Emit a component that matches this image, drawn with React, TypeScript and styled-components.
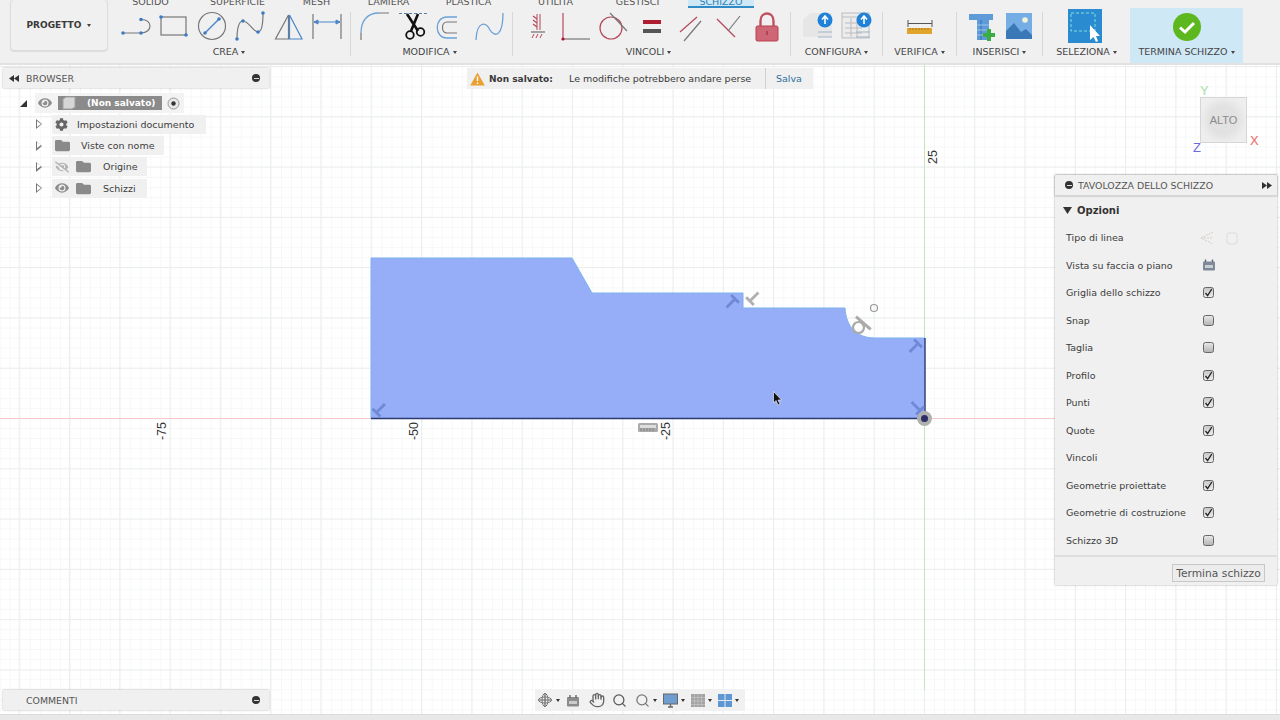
import React from 'react'
import styled, { createGlobalStyle } from 'styled-components'
import { FaCog, FaEye, FaEyeSlash, FaFolder } from 'react-icons/fa'
import { Hand, Search } from 'lucide-react'

const uiFont = `'DejaVu Sans', 'Open Sans', sans-serif`

const GlobalStyle = createGlobalStyle`
  html, body {
    margin: 0;
    padding: 0;
    background: #fff;
    font-family: ${uiFont};
    color: #3c3c3c;
  }
`

const Page = styled.div`
  width: 1280px;
  height: 720px;
  display: flex;
  flex-direction: column;
  overflow: hidden;
`

const Toolbar = styled.header`
  flex: none;
  height: 63px;
  background: #f0f0f0;
  border-bottom: 2px solid #e2e2e2;
  position: relative;
  display: flex;
  flex-direction: column;
`

const TabRow = styled.nav`
  height: 8px;
  flex: none;
  display: flex;
  padding-left: 118px;
  overflow: hidden;
`

const Tab = styled.div<{ $w: number; $active?: boolean }>`
  width: ${props => props.$w}px;
  height: 9px;
  text-align: center;
  font-size: 9.5px;
  line-height: 4px;
  color: ${props => (props.$active ? '#2d7fb8' : '#555')};
  background: ${props => (props.$active ? '#cfe8f5' : 'transparent')};
  border-bottom: ${props => (props.$active ? '3px solid #2f8ac6' : '0')};
  box-sizing: border-box;
  white-space: nowrap;
`

const Gap = styled.span<{ $w: number }>`
  width: ${props => props.$w}px;
  flex: none;
`

const Ribbon = styled.div`
  flex: 1;
  display: flex;
  padding-left: 10px;
`

const ProjectButton = styled.button`
  width: 98px;
  height: 52px;
  margin: -9px 10px 0 0;
  background: #f0f0f0;
  border: 1px solid #dcdcdc;
  border-radius: 4px;
  box-shadow: 0 1px 1px rgba(0, 0, 0, 0.08);
  font: 600 9px ${uiFont};
  color: #3a3a3a;
  padding: 0;
`

const Group = styled.section<{ $w: number; $pad?: number; $active?: boolean }>`
  width: ${props => props.$w}px;
  flex: none;
  display: flex;
  flex-direction: column;
  align-items: stretch;
  background: ${props => (props.$active ? '#cfe8f5' : 'transparent')};

  & > span {
    padding-right: ${props => props.$pad ?? 0}px;
  }
`

const IconRow = styled.div`
  height: 36px;
  display: flex;
`

const GroupLabel = styled.span`
  display: block;
  text-align: center;
  font-size: 9.5px;
  line-height: 14px;
  margin-top: 1px;
  color: #444;
  white-space: nowrap;
`

const Caret = styled.i`
  display: inline-block;
  margin-left: 3px;
  vertical-align: 1px;
  border-left: 2.5px solid transparent;
  border-right: 2.5px solid transparent;
  border-top: 3px solid #444;
`

const Separator = styled.div`
  width: 1px;
  flex: none;
  height: 44px;
  margin-top: 4px;
  background: #d8d8d8;
`

const Canvas = styled.main`
  flex: 1;
  position: relative;
  background-color: #fff;
  background-image: linear-gradient(to right, #eceeee 1px, transparent 1px),
    linear-gradient(to bottom, #eceeee 1px, transparent 1px),
    linear-gradient(to right, #f6f7f7 1px, transparent 1px),
    linear-gradient(to bottom, #f6f7f7 1px, transparent 1px);
  background-size: 50.3px 50.3px, 50.3px 50.3px, 10.06px 10.06px, 10.06px 10.06px;
  background-position: 924px 353px, 924px 353px, 924px 353px, 924px 353px;
`

const SketchLayer = styled.svg`
  position: absolute;
  left: 0;
  top: 0;
`

const AxisLabel = styled.span<{ $x: number; $y: number }>`
  position: absolute;
  left: ${props => props.$x}px;
  top: ${props => props.$y}px;
  transform: translate(-50%, -50%) rotate(-90deg);
  font: 12.5px 'Liberation Sans', Arial, sans-serif;
  color: #333;
`

const PanelBar = styled.div`
  height: 20px;
  box-sizing: border-box;
  display: flex;
  align-items: center;
  gap: 5px;
  background: #f0f0f0;
  box-shadow: 0 0 2px rgba(0, 0, 0, 0.3);
  font-size: 9.4px;
  color: #555;
`

const BrowserPanel = styled.aside`
  position: absolute;
  left: 3px;
  top: 3px;
  width: 266px;
`

const BrowserBar = styled(PanelBar)`
  padding: 0 9px 0 6px;
  gap: 6px;
`

const MinusDot = styled.i`
  width: 8px;
  height: 8px;
  border-radius: 50%;
  background: #333;
  position: relative;
  flex: none;

  &::after {
    content: '';
    position: absolute;
    left: 1.5px;
    right: 1.5px;
    top: 3.5px;
    height: 1px;
    background: #ddd;
  }
`

const Spacer = styled.div`
  flex: 1;
`

const Tree = styled.ul`
  list-style: none;
  margin: 5px 0 0;
  padding: 0;
  display: flex;
  flex-direction: column;
  gap: 1px;
`

const TreeRow = styled.li<{ $root?: boolean }>`
  height: 20.25px;
  display: flex;
  align-items: center;
  padding-left: ${props => (props.$root ? 17 : 33)}px;
  font-size: 9.5px;
  color: #3c3c3c;
`

const RootChip = styled.div`
  display: flex;
  align-items: center;
  height: 20px;
  background: #f3f3f3;
  padding: 0 4px 0 3px;
  margin-left: 8px;
`

const RootTitle = styled.div`
  width: 104px;
  height: 14px;
  display: flex;
  align-items: center;
  background: #8b8b8b;
  color: #fff;
  font-weight: 600;
  font-size: 9px;
  margin: 0 5px 0 6px;
`

const RootName = styled.span`
  margin-left: 9px;
`

const Chip = styled.div<{ $w: number; $iconGap?: number; $textGap: number }>`
  width: ${props => props.$w}px;
  height: 19px;
  margin-left: 10px;
  background: #f0f0f0;
  display: flex;
  align-items: center;
  padding-left: 3px;
  box-sizing: border-box;
  gap: ${props => props.$iconGap ?? 4}px;

  & > span {
    margin-left: ${props => props.$textGap}px;
  }
`

const Expander = styled.i`
  width: 0;
  height: 0;
  border-left: 6px solid #777;
  border-top: 5px solid transparent;
  border-bottom: 5px solid transparent;
  position: relative;
  flex: none;

  &::after {
    content: '';
    position: absolute;
    left: -5px;
    top: -3.4px;
    border-left: 4px solid #fff;
    border-top: 3.4px solid transparent;
    border-bottom: 3.4px solid transparent;
  }
`

const ExpandedMark = styled.i`
  width: 0;
  height: 0;
  flex: none;
  border-right: 7px solid #333;
  border-top: 7px solid transparent;
`

const Notice = styled.div`
  position: absolute;
  left: 467px;
  top: 3px;
  width: 346px;
  height: 21px;
  box-sizing: border-box;
  display: flex;
  align-items: center;
  background: #f0f0f0;
  font-size: 9.5px;
  color: #3a3a3a;
  padding-left: 3px;
`

const NoticeTitle = styled.strong`
  margin-left: 4px;
  width: 80px;
  font-size: 9px;
  font-weight: 600;
`

const NoticeText = styled.span`
  width: 196px;
`

const NoticeAction = styled.span`
  height: 21px;
  line-height: 21px;
  border-left: 1px solid #d0d0d0;
  padding-left: 10px;
  color: #2f6f9f;
`

const CubeFace = styled.div`
  position: absolute;
  left: 1200px;
  top: 32px;
  width: 47px;
  height: 46px;
  box-sizing: border-box;
  border: 1px solid #d6d6d6;
  background: radial-gradient(circle, #e2e2e2 0%, #e2e2e2 45%, #eeeeee 75%);
  display: flex;
  align-items: center;
  justify-content: center;
  font: 11px 'Liberation Sans', Arial, sans-serif;
  color: #8a8a8a;
`

const AxisTag = styled.span<{ $x: number; $y: number; $c: string }>`
  position: absolute;
  left: ${props => props.$x}px;
  top: ${props => props.$y}px;
  font: 13px 'Liberation Sans', Arial, sans-serif;
  color: ${props => props.$c};
`

const Palette = styled.aside`
  position: absolute;
  left: 1055px;
  top: 110px;
  width: 222px;
  background: #f0f0f0;
  box-shadow: 0 0 2px rgba(0, 0, 0, 0.35);
`

const PaletteBar = styled(PanelBar)`
  height: 21px;
  padding: 0 5px 0 10px;
  border-bottom: 1px solid #d4d4d4;
`

const SectionTitle = styled.div`
  height: 27px;
  margin-top: 1px;
  display: flex;
  align-items: center;
  gap: 5px;
  padding-left: 8px;
  font-size: 10px;
  font-weight: 600;
  color: #333;
`

const OptionRow = styled.div`
  height: 27.5px;
  display: grid;
  grid-template-columns: 137px 1fr;
  align-items: center;
  padding-left: 11px;
  font-size: 9.5px;
  color: #3c3c3c;
  white-space: nowrap;
`

const CheckBox = styled.span<{ $on: boolean }>`
  width: 11px;
  height: 11px;
  box-sizing: border-box;
  display: flex;
  align-items: center;
  justify-content: center;
  border: 1px solid #666;
  border-radius: 2.5px;
  background: ${props => (props.$on ? 'linear-gradient(#c8c8c8, #ececec)' : 'linear-gradient(#e8e8e8, #b4b4b4)')};
`

const IconPair = styled.span`
  display: flex;
  gap: 11px;
  margin-left: -3px;
`

const PlaneIcon = styled.svg`
  margin-left: -1px;
`

const PaletteFooter = styled.div`
  margin-top: 1px;
  height: 30px;
  box-sizing: border-box;
  border-top: 2px solid #dedede;
  display: flex;
  align-items: flex-start;
  justify-content: flex-end;
  padding: 7px 12px 0 0;
`

const FooterButton = styled.button`
  width: 93px;
  height: 18px;
  padding: 0;
  background: #ececec;
  border: 1px solid #c8c8c8;
  font: 10.7px ${uiFont};
  color: #555;
`

const CommentsPanel = styled.aside`
  position: absolute;
  left: 3px;
  top: 625px;
  width: 266px;
`

const CommentsBar = styled(PanelBar)`
  padding: 0 9px 0 23px;
`

const NavBar = styled.div`
  position: absolute;
  left: 535px;
  top: 624px;
  width: 210px;
  height: 22px;
  background: rgba(240, 240, 240, 0.9);
  display: flex;
  align-items: center;
  padding-left: 2px;
  box-sizing: border-box;
  color: #666;
`

const NavCaret = styled(Caret)`
  margin: 0 6px 0 3px;
  border-top-color: #333;
`

const BottomEdge = styled.div`
  height: 5px;
  flex: none;
  background: #e8e8e8;
  border-top: 1px solid #dcdcdc;
`

const Tile = ({ from, to, children }: { from: number; to: number; children: React.ReactNode }) => (
  <svg width={to - from} height={36} viewBox={`${from} 8 ${to - from} 36`} style={{ flex: 'none' }}>
    {children}
  </svg>
)

const blue = '#4a86c8'
const gray = '#777'
const red = '#b5485a'

const Dot = ({ x, y }: { x: number; y: number }) => <circle cx={x} cy={y} r={1.8} fill='#3c7cc4' />

const Check = () => (
  <svg width='9' height='9' viewBox='0 0 9 9'>
    <path d='M1.5 5 L3.6 7.6 L7.8 1' fill='none' stroke='#222' strokeWidth='1.3' />
  </svg>
)

// the little T that marks a perpendicular constraint on the sketch
const PerpMark = ({ x, y, r, c }: { x: number; y: number; r: number; c: string }) => (
  <g transform={`translate(${x} ${y}) rotate(${r})`} stroke={c} strokeWidth='2.8' fill='none'>
    <path d='M-5.5 -5 H5.5 M0 -5 V7' />
  </g>
)

const options: [string, boolean][] = [
  ['Griglia dello schizzo', true],
  ['Snap', false],
  ['Taglia', false],
  ['Profilo', true],
  ['Punti', true],
  ['Quote', true],
  ['Vincoli', true],
  ['Geometrie proiettate', true],
  ['Geometrie di costruzione', true],
  ['Schizzo 3D', false],
]

const outline = 'M371 258 H572 L592 293 H743 V308 H845 C846 326 856 338 875 338 H925 V418.5 H371 Z'

export default function App() {
  return (
    <Page>
      <GlobalStyle />
      <Toolbar>
        <TabRow>
          <Tab $w={65}>SOLIDO</Tab>
          <Tab $w={109}>SUPERFICIE</Tab>
          <Tab $w={49}>MESH</Tab>
          <Tab $w={95}>LAMIERA</Tab>
          <Tab $w={65}>PLASTICA</Tab>
          <Tab $w={109}>UTILITÀ</Tab>
          <Tab $w={55}>GESTISCI</Tab>
          <Gap $w={23} />
          <Tab $w={66} $active>SCHIZZO</Tab>
        </TabRow>
        <Ribbon>
          <ProjectButton>
            PROGETTO <Caret />
          </ProjectButton>
          <Group $w={232} $pad={10}>
            <IconRow>
              <Tile from={118} to={155}>
                <path d='M123 33 H141 M141 19.5 C153 19 153 33 141 33' fill='none' stroke={gray} strokeWidth='1.2' />
                <Dot x={123} y={33} />
                <Dot x={141} y={33} />
                <Dot x={141} y={19.5} />
              </Tile>
              <Tile from={155} to={195}>
                <rect x='161' y='17' width='25' height='18' fill='none' stroke={gray} strokeWidth='1.2' />
                <Dot x={161} y={17} />
                <Dot x={186} y={35} />
              </Tile>
              <Tile from={195} to={232}>
                <circle cx='212' cy='26' r='13.5' fill='none' stroke={gray} strokeWidth='1.2' />
                <path d='M205 33 L219 19' stroke={blue} strokeWidth='1.4' />
                <Dot x={205} y={33} />
                <Dot x={219} y={19} />
              </Tile>
              <Tile from={232} to={270}>
                <path d='M237 39 C237 28 239 21 243 21 C249 21 253 32 258 32 C262 32 263 22 263 13' fill='none' stroke={gray} strokeWidth='1.2' />
                <Dot x={237} y={39} />
                <Dot x={243} y={21} />
                <Dot x={258} y={32} />
                <Dot x={263} y={13} />
              </Tile>
              <Tile from={270} to={308}>
                <path d='M288.5 15 L275.5 39 H288.5 Z' fill='none' stroke={gray} strokeWidth='1.2' />
                <path d='M289.5 15 L302 39 H289.5 Z' fill='none' stroke={blue} strokeWidth='1.2' />
              </Tile>
              <Tile from={308} to={350}>
                <path d='M313 14 V39 M341 14 V39' stroke={gray} strokeWidth='1.2' />
                <path d='M314 22 H340 M314 22 L318 20 V24 Z M340 22 L336 20 V24 Z' stroke={blue} fill={blue} strokeWidth='1' />
              </Tile>
            </IconRow>
            <GroupLabel>
              CREA
              <Caret />
            </GroupLabel>
          </Group>
          <Separator />
          <Group $w={161} $pad={4}>
            <IconRow>
              <Tile from={351} to={395}>
                <path d='M361 33 C361 21 367 13 379 13' fill='none' stroke='#6aa0d8' strokeWidth='1.3' />
                <path d='M379 13 H389 M361 33 V40' stroke={gray} strokeWidth='1.2' />
              </Tile>
              <Tile from={395} to={431}>
                <path d='M399 13.5 H428' stroke='#5a7fa8' strokeWidth='1' strokeDasharray='3 2' />
                <path d='M407 14 L418 31 M418 14 L411 31' stroke='#111' strokeWidth='2.6' />
                <circle cx='410' cy='35' r='3.8' fill='none' stroke='#111' strokeWidth='1.8' />
                <circle cx='420.5' cy='32' r='3.8' fill='none' stroke='#111' strokeWidth='1.8' />
              </Tile>
              <Tile from={431} to={470}>
                <path d='M457 17 H447 C434 17 434 38 447 38 H457' fill='none' stroke='#6aa0d8' strokeWidth='1.3' />
                <path d='M457 22 H447 C441 22 441 33 447 33 H457' fill='none' stroke={gray} strokeWidth='1.2' />
              </Tile>
              <Tile from={470} to={512}>
                <path d='M476 40 C477 20 486 22 490 30 C495 38 503 36 503 13' fill='none' stroke='#6aa0d8' strokeWidth='1.3' />
              </Tile>
            </IconRow>
            <GroupLabel>
              MODIFICA
              <Caret />
            </GroupLabel>
          </Group>
          <Separator />
          <Group $w={277} $pad={6}>
            <IconRow>
              <Tile from={513} to={552}>
                <path d='M537 14 V30 M540 14 V30' stroke={red} strokeWidth='1' />
                <path d='M533 16 L537 19 M533 20 L537 23 M533 24 L537 27' stroke={red} strokeWidth='1.2' />
                <path d='M531 32 H545' stroke={gray} strokeWidth='1.3' />
                <path d='M532 38 L534 34 M536 38 L538 34 M540 38 L542 34' stroke={red} strokeWidth='1' />
              </Tile>
              <Tile from={552} to={595}>
                <path d='M563 13 V39' stroke={red} strokeWidth='1.2' />
                <path d='M563 39 H590' stroke={gray} strokeWidth='1.2' />
                <circle cx='563' cy='39' r='1.6' fill='#b01030' />
              </Tile>
              <Tile from={595} to={635}>
                <circle cx='611' cy='28' r='11' fill='none' stroke={red} strokeWidth='1.2' />
                <path d='M610 13 L627 31' stroke={gray} strokeWidth='1.2' />
              </Tile>
              <Tile from={635} to={672}>
                <rect x='643' y='20' width='18' height='4' fill='#b01c30' />
                <rect x='643' y='29' width='18' height='4' fill='#555' />
              </Tile>
              <Tile from={672} to={710}>
                <path d='M680 32 L697 17' stroke={red} strokeWidth='1.2' />
                <path d='M684 41 L701 21' stroke={gray} strokeWidth='1.2' />
              </Tile>
              <Tile from={710} to={748}>
                <path d='M717 19 L735 37' stroke={red} strokeWidth='1.2' />
                <path d='M728 31 L740 16' stroke={gray} strokeWidth='1.2' />
              </Tile>
              <Tile from={748} to={790}>
                <path d='M760.5 27 V21 C760.5 11 773.5 11 773.5 21 V27' fill='none' stroke='#c2505f' strokeWidth='2.4' />
                <rect x='756' y='26' width='22' height='15' rx='1.5' fill='#cf6675' stroke='#b8404f' />
                <rect x='766.5' y='31' width='1' height='4' fill='#8a2a38' />
              </Tile>
            </IconRow>
            <GroupLabel>
              VINCOLI
              <Caret />
            </GroupLabel>
          </Group>
          <Separator />
          <Group $w={91}>
            <IconRow>
              <Tile from={791} to={838}>
                <path d='M803 20 L810 13 H832 V37 H803 Z' fill='#e6e6e6' />
                <path d='M818 32 H832 M818 37 H832' stroke='#9db4c8' strokeWidth='1' />
                <circle cx='825' cy='20' r='7.5' fill='#1f82d8' />
                <path d='M825 24 V17 M822 19.5 L825 16 L828 19.5' stroke='#fff' strokeWidth='1.6' fill='none' />
              </Tile>
              <Tile from={838} to={882}>
                <rect x='842' y='13' width='27' height='25' fill='#ececec' stroke='#bbb' />
                <path d='M842 17 H869 M845 23 H862 M845 28 H862 M845 33 H862 M851 18 V37 M857 18 V37' stroke='#bcbcbc' strokeWidth='1' />
                <path d='M856 32 H870 M856 37 H870' stroke='#9db4c8' strokeWidth='1' />
                <circle cx='864' cy='20' r='7.5' fill='#1f82d8' />
                <path d='M864 24 V17 M861 19.5 L864 16 L867 19.5' stroke='#fff' strokeWidth='1.6' fill='none' />
              </Tile>
            </IconRow>
            <GroupLabel>
              CONFIGURA
              <Caret />
            </GroupLabel>
          </Group>
          <Separator />
          <Group $w={73}>
            <IconRow>
              <Tile from={883} to={956}>
                <path d='M908 20 V27 M932 20 V27 M908 23.5 H932' stroke='#555' strokeWidth='1' />
                <rect x='907' y='28' width='25' height='6' fill='#e2a52c' />
                <path d='M910 28 V30 M913 28 V30 M916 28 V30 M919 28 V30 M922 28 V30 M925 28 V30 M928 28 V30' stroke='#9a6a10' strokeWidth='0.7' />
              </Tile>
            </IconRow>
            <GroupLabel>
              VERIFICA
              <Caret />
            </GroupLabel>
          </Group>
          <Separator />
          <Group $w={85}>
            <IconRow>
              <Tile from={957} to={1000}>
                <path d='M969 14 H993 V20 H989 V40 H977 V20 H969 Z' fill='#5f9bd8' />
                <path d='M981 20 V40' stroke='#3f7fc0' strokeWidth='1.5' />
                <path d='M977 25 H989 M977 30 H989 M977 35 H989' stroke='#9cc4ea' strokeWidth='1' />
                <path d='M983 35 H995 M989 29 V41' stroke='#3aae44' strokeWidth='4' />
              </Tile>
              <Tile from={1000} to={1042}>
                <rect x='1006' y='13' width='26' height='26' fill='#74aee4' />
                <circle cx='1025' cy='20' r='2.8' fill='#f4f2d8' />
                <path d='M1006 39 V31 L1014 23 L1021 32 L1026 29 L1032 35 V39 Z' fill='#3a78b8' />
              </Tile>
            </IconRow>
            <GroupLabel>
              INSERISCI
              <Caret />
            </GroupLabel>
          </Group>
          <Separator />
          <Group $w={87}>
            <IconRow>
              <Tile from={1043} to={1130}>
                <rect x='1068' y='9' width='34' height='34' fill='#2a8bd0' />
                <rect x='1071' y='13' width='24' height='18' fill='none' stroke='#7fe0d8' strokeWidth='1' strokeDasharray='3 2' />
                <path d='M1090 25 V40 L1093.5 37 L1096 42 L1098 41 L1096 36 H1100 Z' fill='#fff' />
              </Tile>
            </IconRow>
            <GroupLabel>
              SELEZIONA
              <Caret />
            </GroupLabel>
          </Group>
          <Group $w={113} $active>
            <IconRow>
              <Tile from={1130} to={1243}>
                <circle cx='1187' cy='27' r='14' fill='#5cb81e' />
                <path d='M1180 27.5 L1185 32 L1194 23' fill='none' stroke='#fff' strokeWidth='3' />
              </Tile>
            </IconRow>
            <GroupLabel>
              TERMINA SCHIZZO
              <Caret />
            </GroupLabel>
          </Group>
        </Ribbon>
      </Toolbar>

      <Canvas>
        <SketchLayer width='1280' height='650' viewBox='0 65 1280 650'>
          <path d='M0 418.5 H1055' stroke='#f4c8cc' strokeWidth='1' />
          <path d='M924.5 65 V690' stroke='#bfe6bf' strokeWidth='1' />
          <path d={outline} fill='#8ea9f6' fillOpacity='0.94' />
          <path d='M371 418.5 V258 H572 L592 293 H743 V308 H845 C846 326 856 338 875 338 H925' fill='none' stroke='#7db2ee' strokeWidth='1' />
          <path d='M371 418.5 H925 V338' fill='none' stroke='#2d3a70' strokeWidth='1.4' />
          <PerpMark x={380} y={409} r={-135} c='#7088d6' />
          <PerpMark x={731.5} y={302.5} r={45} c='#7088d6' />
          <PerpMark x={914.5} y={347} r={45} c='#7088d6' />
          <PerpMark x={916.5} y={407} r={135} c='#7088d6' />
          <PerpMark x={753.5} y={297.5} r={-135} c='#b0b0b0' />
          <g stroke='#aaa' fill='none'>
            <circle cx='858.5' cy='327.5' r='5.5' strokeWidth='2.2' fill='rgba(255,255,255,0.8)' />
            <path d='M856 316.7 L870.7 329.3' strokeWidth='3' />
            <circle cx='874' cy='308' r='3.5' strokeWidth='1.2' stroke='#999' />
          </g>
          <circle cx='924.5' cy='418.5' r='7.5' fill='#b0b0b0' />
          <circle cx='924.5' cy='418.5' r='3.5' fill='#2d2f66' />
          <g>
            <rect x='638' y='423' width='20' height='9' rx='1.5' fill='#aaa' />
            <rect x='640' y='425' width='16' height='3' fill='#ddd' />
            <path d='M641 428 V431 M644 428 V431 M647 428 V431 M650 428 V431 M653 428 V431' stroke='#777' strokeWidth='0.8' />
          </g>
          <path d='M773.5 391.5 V403 L776 400.5 L778 405 L780 404 L778 400 H781.5 Z' fill='#111' stroke='#fff' strokeWidth='0.6' />
        </SketchLayer>

        <AxisLabel $x={162} $y={366}>-75</AxisLabel>
        <AxisLabel $x={414} $y={366}>-50</AxisLabel>
        <AxisLabel $x={666} $y={366}>-25</AxisLabel>
        <AxisLabel $x={933} $y={92}>25</AxisLabel>

        <BrowserPanel>
          <BrowserBar>
            <svg width='11' height='7' viewBox='0 0 11 7'>
              <path d='M5 0 V7 L0 3.5 Z M10 0 V7 L5 3.5 Z' fill='#333' />
            </svg>
            <span>BROWSER</span>
            <Spacer />
            <MinusDot />
          </BrowserBar>
          <Tree>
            <TreeRow $root>
              <ExpandedMark />
              <RootChip>
                <FaEye size={14} color='#8d8d8d' />
                <RootTitle>
                  <svg width='18' height='14' viewBox='0 0 18 14' style={{ marginLeft: 2 }}>
                    <path d='M3 3 L6 1 H15 V11 L12 13 H3 Z' fill='#d6d6d6' stroke='#a0a0a0' />
                  </svg>
                  <RootName>(Non salvato)</RootName>
                </RootTitle>
                <svg width='13' height='13' viewBox='0 0 13 13'>
                  <circle cx='6.5' cy='6.5' r='5.5' fill='#e8e8e8' stroke='#999' />
                  <circle cx='6.5' cy='6.5' r='2.2' fill='#333' />
                </svg>
              </RootChip>
            </TreeRow>
            <TreeRow>
              <Expander />
              <Chip $w={154} $textGap={5}>
                <FaCog size={13} color='#666' />
                <span>Impostazioni documento</span>
              </Chip>
            </TreeRow>
            <TreeRow>
              <Expander />
              <Chip $w={112} $textGap={7}>
                <FaFolder size={15} color='#8a8a8a' />
                <span>Viste con nome</span>
              </Chip>
            </TreeRow>
            <TreeRow>
              <Expander />
              <Chip $w={95} $iconGap={7} $textGap={5}>
                <FaEyeSlash size={14} color='#b4b4b4' />
                <FaFolder size={15} color='#8a8a8a' />
                <span>Origine</span>
              </Chip>
            </TreeRow>
            <TreeRow>
              <Expander />
              <Chip $w={95} $iconGap={7} $textGap={5}>
                <FaEye size={14} color='#8d8d8d' />
                <FaFolder size={15} color='#8a8a8a' />
                <span>Schizzi</span>
              </Chip>
            </TreeRow>
          </Tree>
        </BrowserPanel>

        <Notice>
          <svg width='15' height='14' viewBox='0 0 15 14'>
            <path d='M7.5 0.5 L14.8 13.5 H0.2 Z' fill='#e8a030' />
            <path d='M7.5 4.5 V9 M7.5 10.5 V12' stroke='#fff' strokeWidth='1.4' />
          </svg>
          <NoticeTitle>Non salvato:</NoticeTitle>
          <NoticeText>Le modifiche potrebbero andare perse</NoticeText>
          <NoticeAction>Salva</NoticeAction>
        </Notice>

        <CubeFace>ALTO</CubeFace>
        <AxisTag $x={1200} $y={18} $c='#a8e0a8'>Y</AxisTag>
        <AxisTag $x={1193} $y={75} $c='#6a6adf'>Z</AxisTag>
        <AxisTag $x={1250} $y={68} $c='#e86a6a'>X</AxisTag>

        <Palette>
          <PaletteBar>
            <MinusDot />
            <span>TAVOLOZZA DELLO SCHIZZO</span>
            <Spacer />
            <svg width='10' height='7' viewBox='0 0 10 7'>
              <path d='M0 0 V7 L5 3.5 Z M5 0 V7 L10 3.5 Z' fill='#333' />
            </svg>
          </PaletteBar>
          <SectionTitle>
            <svg width='9' height='7' viewBox='0 0 9 7'>
              <path d='M0 0 H9 L4.5 7 Z' fill='#333' />
            </svg>
            Opzioni
          </SectionTitle>
          <OptionRow>
            <span>Tipo di linea</span>
            <IconPair>
              <svg width='14' height='14' viewBox='0 0 14 14'>
                <path d='M13 1 L1 7 L13 13 M1 7 H13' fill='none' stroke='#d8cfc4' strokeWidth='1' strokeDasharray='2 1' />
              </svg>
              <svg width='14' height='14' viewBox='0 0 14 14'>
                <rect x='2' y='2' width='10' height='11' rx='2' fill='none' stroke='#dcdcdc' />
              </svg>
            </IconPair>
          </OptionRow>
          <OptionRow>
            <span>Vista su faccia o piano</span>
            <PlaneIcon width='14' height='12' viewBox='0 0 14 12'>
              <rect x='1' y='2.5' width='12' height='9' rx='1' fill='#7f8a96' />
              <path d='M3.5 0.5 V3 M10.5 0.5 V3' stroke='#5f6a76' strokeWidth='1.4' />
              <rect x='3' y='6' width='8' height='3' fill='#c8ced4' />
            </PlaneIcon>
          </OptionRow>
          {options.map(([label, on]) => (
            <OptionRow key={label}>
              <span>{label}</span>
              <CheckBox $on={on}>{on ? <Check /> : null}</CheckBox>
            </OptionRow>
          ))}
          <PaletteFooter>
            <FooterButton>Termina schizzo</FooterButton>
          </PaletteFooter>
        </Palette>

        <CommentsPanel>
          <CommentsBar>
            <span>COMMENTI</span>
            <Spacer />
            <MinusDot />
          </CommentsBar>
        </CommentsPanel>

        <NavBar>
          <svg width='16' height='16' viewBox='0 0 16 16'>
            <path d='M8 1 V15 M1 8 H15' stroke='#666' strokeWidth='1.2' />
            <ellipse cx='8' cy='8' rx='6.5' ry='3' fill='none' stroke='#777' />
            <ellipse cx='8' cy='8' rx='3' ry='6.5' fill='none' stroke='#777' />
          </svg>
          <NavCaret />
          <svg width='14' height='13' viewBox='0 0 14 13'>
            <rect x='1' y='3' width='12' height='9.5' rx='1' fill='#8c8c8c' />
            <path d='M4 1 V4 M10 1 V4' stroke='#666' strokeWidth='1.4' />
            <rect x='3' y='7' width='8' height='3' fill='#ccc' />
          </svg>
          <Gap $w={9} />
          <Hand size={16} color='#666' />
          <Gap $w={7} />
          <Search size={15} color='#555' />
          <Gap $w={8} />
          <Search size={15} color='#777' />
          <NavCaret />
          <svg width='15' height='15' viewBox='0 0 15 15'>
            <rect x='0.5' y='1' width='14' height='10' fill='#6f9dd0' stroke='#666' />
            <path d='M5 14 H10 M7.5 11 V14' stroke='#666' strokeWidth='1.4' />
          </svg>
          <NavCaret />
          <svg width='14' height='14' viewBox='0 0 14 14'>
            <rect x='0' y='1' width='14' height='13' fill='#a2a2a2' />
            <path d='M3.5 1 V14 M7 1 V14 M10.5 1 V14 M0 4.5 H14 M0 8 H14 M0 11.5 H14' stroke='#ccc' strokeWidth='0.6' />
          </svg>
          <NavCaret />
          <svg width='14' height='13' viewBox='0 0 14 13'>
            <rect width='14' height='13' fill='#5f96d4' />
            <path d='M7 0 V13 M0 6.5 H14' stroke='#e8e8e8' strokeWidth='1' />
          </svg>
          <NavCaret />
        </NavBar>
      </Canvas>
      <BottomEdge />
    </Page>
  )
}
